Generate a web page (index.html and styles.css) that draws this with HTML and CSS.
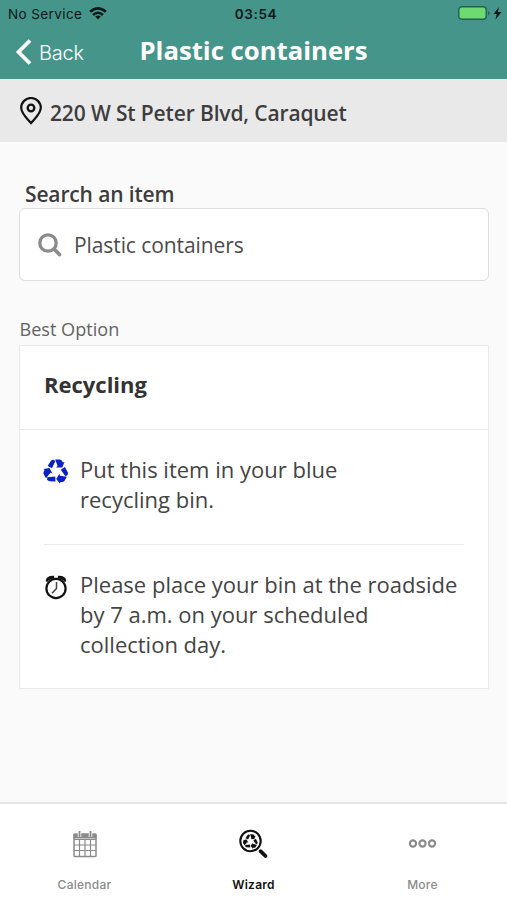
FILE: index.html
```html
<!DOCTYPE html>
<html lang="en">
<head>
<meta charset="utf-8">
<meta name="viewport" content="width=device-width">
<title>Plastic containers</title>
<link rel="stylesheet" href="styles.css">
</head>
<body>
<svg class="defs" aria-hidden="true">
  <defs>
    <g id="arm">
      <path d="M-8.400-5.400-5.200-10.500Q-4-12-2.300-11.600L-.6-10.500-4-3.200Z"/>
      <path d="M-.8-12H4Q5.300-11.800 6-10.600L7-9.100 8.500-9.600 6.300-3.900 0-4.100 1.600-5.500Z"/>
    </g>
    <g id="recycle">
      <use href="#arm"/>
      <use href="#arm" transform="rotate(120)"/>
      <use href="#arm" transform="rotate(240)"/>
    </g>
  </defs>
</svg>
<div class="screen">
  <header class="top">
    <div class="status">
      <div class="carrier"><span>No Service</span>
        <svg width="18" height="13" viewBox="0 0 18 13" fill="none" stroke="#07191a" stroke-width="2.6"><path d="M1.200 4.800Q9-2 16.800 4.800M4 7.900Q9 3.600 14 7.900"/><path d="M9 12.400 6.200 9.600Q9 7.300 11.800 9.600Z" fill="#07191a" stroke="none"/></svg>
      </div>
      <span class="clock">03:54</span>
      <div class="power">
        <svg width="44" height="15" viewBox="0 0 44 15"><rect x=".8" y=".8" width="27.400" height="12.400" rx="3" fill="#6ddb70" stroke="#235f58" stroke-width="1.400"/><path d="M30 5v4q1.500-.5 1.500-2T30 5" fill="#235f58"/><path d="M41 1 35.500 8H38.800L37.500 13.500 43.500 6H39.800Z" fill="#07191a"/></svg>
      </div>
    </div>
    <nav class="bar">
      <a class="back"><svg width="17" height="28" viewBox="0 0 17 28"><path d="M15 2.500 3.500 14 15 25.500" fill="none" stroke="#fff" stroke-width="3.800"/></svg><span>Back</span></a>
      <h1>Plastic containers</h1>
    </nav>
  </header>
  <div class="address">
    <svg width="22" height="28" viewBox="0 0 22 28" fill="none" stroke="#111"><path d="M11 26C7.500 21.600 1.200 17 1.200 10.800A9.800 9.800 0 0 1 20.800 10.800C20.800 17 14.500 21.600 11 26Z" stroke-width="2.200"/><circle cx="11" cy="11" r="3.300" stroke-width="2.300"/></svg>
    <span>220 W St Peter Blvd, Caraquet</span>
  </div>
  <main>
    <label class="label">Search an item</label>
    <div class="search">
      <svg width="24" height="24" viewBox="0 0 24 24" fill="none" stroke="#8b8b8b"><circle cx="10" cy="10" r="8.200" stroke-width="3.300"/><path d="M16 16 21.500 21.500" stroke-width="3.800" stroke-linecap="round"/></svg>
      <span>Plastic containers</span>
    </div>
    <p class="caption">Best Option</p>
    <section class="card">
      <h2>Recycling</h2>
      <div class="steps">
        <div class="step">
          <svg class="mark" width="26" height="26" viewBox="-13 -12.500 26 26" fill="#0a1fc4"><use href="#recycle"/></svg>
          <p>Put this item in your blue<br>recycling bin.</p>
        </div>
        <div class="step">
          <svg class="mark" width="26" height="26" viewBox="0 0 26 26" fill="none" stroke="#111"><circle cx="13" cy="14.500" r="9.600" stroke-width="2.200"/><path d="M13.500 8V14.500L9 19.200" stroke="#444" stroke-width="1.500"/><path d="M2.700 7.300Q3 1.500 10.800 1.800L11.600 4.600Q6.500 5 4.300 8ZM23.300 7.300Q23 1.500 15.200 1.800L14.400 4.600Q19.500 5 21.700 8Z" fill="#111" stroke="none"/></svg>
          <p>Please place your bin at the roadside<br>by 7 a.m. on your scheduled<br>collection day.</p>
        </div>
      </div>
    </section>
  </main>
  <footer class="tabs">
    <a class="tab">
      <svg width="28" height="28" viewBox="0 0 28 28" fill="none" stroke="#8b8b8b"><rect x="3" y="4" width="22" height="22.500" rx="1" stroke-width="1.500"/><path d="M2.500 4H25.500V8.500H2.500Z" fill="#8b8b8b" stroke="none"/><path d="M3 9.500H25M3 15H25M3 20.500H25M8.500 9V26M14 9V26M19.500 9V26" stroke-width="1.200"/><path d="M8.500 1V7M19.500 1V7" stroke="#fff" stroke-width="3.500"/><path d="M8.500 1V7M19.500 1V7" stroke-width="1.800"/></svg>
      <span>Calendar</span>
    </a>
    <a class="tab active">
      <svg width="30" height="30" viewBox="0 0 30 30"><circle cx="11.500" cy="12" r="10.200" fill="none" stroke="#111" stroke-width="2.100"/><g transform="translate(11.500 12.500) scale(.6)" fill="#111"><use href="#recycle"/></g><path d="M21.500 22.200 26.500 27" stroke="#111" stroke-width="3.800" stroke-linecap="round"/></svg>
      <span>Wizard</span>
    </a>
    <a class="tab">
      <svg width="30" height="28" viewBox="0 0 30 28" fill="none" stroke="#8b8b8b" stroke-width="2.100"><circle cx="5" cy="13.500" r="3.100"/><circle cx="14.500" cy="13.500" r="3.100"/><circle cx="24" cy="13.500" r="3.100"/></svg>
      <span>More</span>
    </a>
  </footer>
</div>
</body>
</html>
```
FILE: styles.css
```css
* { box-sizing: border-box; margin: 0; padding: 0; }
body { background: #fafafa; color: #3d3d3d; font-family: "Open Sans", "Noto Sans", sans-serif; }
.defs { position: absolute; width: 0; height: 0; }
svg { display: block; flex: none; }
.screen { width: 507px; height: 900px; display: flex; flex-direction: column; overflow: hidden; white-space: nowrap; }
.top { height: 79px; flex: none; background: #46958b; }
.status { height: 27px; display: grid; grid-template-columns: 1fr auto 1fr; align-items: center; padding: 0 5px 0 8px; color: #07191a; font: 13.5px Inter, sans-serif; }
.carrier { display: flex; align-items: center; gap: 7px; letter-spacing: .4px; }
.clock { font-weight: 600; letter-spacing: .6px; padding-left: 2px; }
.power { justify-self: end; }
.bar { height: 50px; display: grid; grid-template-columns: 1fr auto 1fr; align-items: center; padding: 0 15px; color: #fff; }
.back { display: flex; align-items: center; gap: 7px; font: 350 20px Inter, sans-serif; letter-spacing: -.2px; }
.back span { padding-top: 1px; }
h1 { font-size: 25.700px; line-height: 34px; font-weight: 700; padding-bottom: 3px; }
.address { height: 63px; flex: none; display: flex; align-items: center; gap: 8px; padding: 5px 20px 0; background: #e9e9e9; font-size: 21px; font-weight: 600; letter-spacing: -.14px; }
.address svg { margin-top: -4px; }
main { flex: 1; padding: 38px 18px 0 19px; }
.label { display: block; height: 28px; padding-left: 6px; line-height: 28px; font-size: 21px; font-weight: 600; letter-spacing: -.14px; }
.search { height: 73px; display: flex; align-items: center; gap: 12px; padding-left: 18px; background: #fff; border: 1px solid #dedede; border-radius: 6px; font-size: 21px; letter-spacing: -.09px; color: #4b4b4b; }
.caption { margin-top: 36px; height: 28px; line-height: 25px; padding-left: .5px; font-size: 18.100px; color: #636363; }
.card { height: 344px; background: #fff; border: 1px solid #e9e9e9; }
h2 { height: 84px; padding-left: 24px; border-bottom: 1px solid #e9e9e9; line-height: 77px; font-size: 22px; font-weight: 700; color: #333; }
.steps { padding: 0 24px; }
.step { display: flex; gap: 11px; padding-top: 24px; font-size: 22px; line-height: 30px; color: #444; }
.step:first-child { height: 115px; border-bottom: 1px solid #e9e9e9; }
.mark { margin-top: 5px; margin-left: -1px; }
.tabs { height: 98px; flex: none; display: grid; grid-template-columns: repeat(3, 1fr); background: #fff; border-top: 2px solid #e6e6e6; }
.tab { display: flex; flex-direction: column; align-items: center; padding-top: 25px; color: #8b8b8b; font: 500 12px/16px Inter, sans-serif; letter-spacing: .25px; }
.tab svg { height: 30px; }
.tab span { margin-top: 18px; }
.active { color: #111; font-weight: 600; }
```
